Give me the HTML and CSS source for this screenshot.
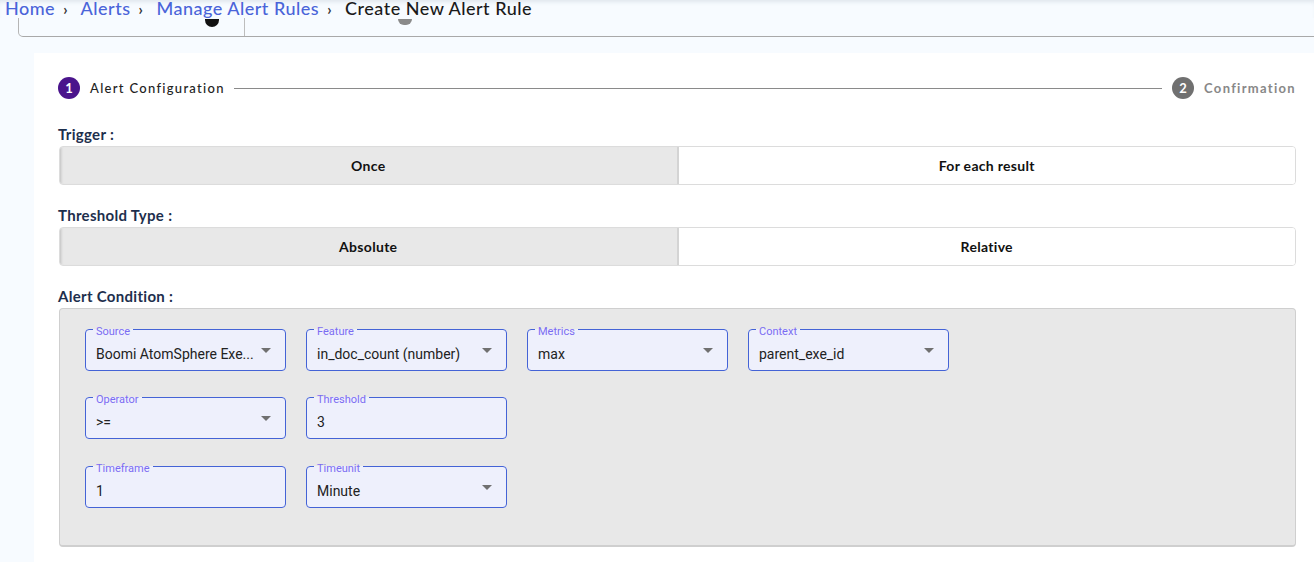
FILE: index.html
```html
<!DOCTYPE html>
<html>
<head>
<meta charset="utf-8">
<link rel="stylesheet" href="styles.css">
</head>
<body>
<div class="page">
  <header class="crumbs">
    <a class="crumb-link">Home</a><span class="sep">›</span>
    <a class="crumb-link">Alerts</a><span class="sep">›</span>
    <a class="crumb-link">Manage Alert Rules</a><span class="sep">›</span>
    <span class="crumb-current">Create New Alert Rule</span>
  </header>
  <div class="tabbar">
    <div class="tab tab-first"><span class="tab-dot dark"></span></div>
    <div class="tab tab-second"><span class="tab-dot grey"></span></div>
  </div>
  <div class="layout">
    <div class="rail"></div>
    <main class="panel">
      <div class="stepper">
        <div class="step active"><span class="step-num">1</span><span class="step-label">Alert Configuration</span></div>
        <div class="step-line"></div>
        <div class="step"><span class="step-num">2</span><span class="step-label">Confirmation</span></div>
      </div>

      <section class="section">
        <div class="section-label">Trigger :</div>
        <div class="toggle">
          <button class="toggle-btn selected">Once</button>
          <button class="toggle-btn">For each result</button>
        </div>
      </section>

      <section class="section">
        <div class="section-label">Threshold Type :</div>
        <div class="toggle">
          <button class="toggle-btn selected">Absolute</button>
          <button class="toggle-btn">Relative</button>
        </div>
      </section>

      <section class="section">
        <div class="section-label">Alert Condition :</div>
        <div class="condition">
          <div class="field-row">
            <fieldset class="field"><legend>Source</legend><div class="field-value"><span class="val">Boomi AtomSphere Exe...</span><span class="caret"></span></div></fieldset>
            <fieldset class="field"><legend>Feature</legend><div class="field-value"><span class="val">in_doc_count (number)</span><span class="caret"></span></div></fieldset>
            <fieldset class="field"><legend>Metrics</legend><div class="field-value"><span class="val">max</span><span class="caret"></span></div></fieldset>
            <fieldset class="field"><legend>Context</legend><div class="field-value"><span class="val">parent_exe_id</span><span class="caret"></span></div></fieldset>
          </div>
          <div class="field-row">
            <fieldset class="field"><legend>Operator</legend><div class="field-value"><span class="val">&gt;=</span><span class="caret"></span></div></fieldset>
            <fieldset class="field"><legend>Threshold</legend><div class="field-value"><span class="val">3</span></div></fieldset>
          </div>
          <div class="field-row field-row-last">
            <fieldset class="field"><legend>Timeframe</legend><div class="field-value"><span class="val">1</span></div></fieldset>
            <fieldset class="field"><legend>Timeunit</legend><div class="field-value"><span class="val">Minute</span><span class="caret"></span></div></fieldset>
          </div>
        </div>
      </section>
    </main>
  </div>
</div>
</body>
</html>
```

FILE: styles.css
```css
* { box-sizing: border-box; }
html, body { margin: 0; padding: 0; }
body {
  background: #f7fbff;
  font-family: Lato, "Noto Sans", sans-serif;
  color: #1f2d3d;
  overflow: hidden;
  height: 562px;
}
.page { display: flex; flex-direction: column; height: 562px; }

.crumbs {
  height: 18px;
  padding-left: 5px;
  font-size: 18px;
  line-height: 16px;
  letter-spacing: 0.5px;
  font-weight: 500;
  white-space: nowrap;
  box-shadow: inset 0 4px 4px -2px rgba(60, 80, 110, 0.12);
  background: #f7fbff;
  flex: none;
}
.crumb-link { color: #4a64d9; }
.crumb-current { color: #1a1a1a; }
.sep { color: #333; font-size: 15px; margin: 0 8px; font-weight: 700; }

.tabbar {
  height: 19px;
  margin-left: 18px;
  display: flex;
  border-left: 1px solid #b5b5b5;
  border-bottom: 1px solid #a9a9a9;
  border-bottom-left-radius: 5px;
  flex: none;
}
.tab { display: flex; justify-content: flex-end; align-items: flex-start; }
.tab-first { width: 226px; border-right: 1px solid #bdbdbd; padding-right: 25px; }
.tab-second { width: 167px; }
.tab-dot { width: 14px; height: 8px; border-radius: 0 0 7px 7px; margin-top: 1px; }
.tab-dot.dark { background: #111; }
.tab-dot.grey { background: #8a8a8a; height: 6px; }

.layout { display: flex; flex: 1; margin-top: 16px; }
.rail { width: 34px; flex: none; }
.panel {
  flex: 1;
  background: #fff;
  padding: 24px 18px 0 24px;
}

.stepper { display: flex; align-items: center; height: 22px; }
.step { display: flex; align-items: center; gap: 10px; }
.step-num {
  width: 22px; height: 22px; border-radius: 50%;
  background: #707070; color: #fff;
  font-size: 13px; font-weight: 700;
  display: flex; align-items: center; justify-content: center;
}
.step.active .step-num { background: #4a148c; }
.step-label { font-size: 13px; letter-spacing: 1.3px; color: #888; font-weight: 700; }
.step.active .step-label { color: #222; font-weight: 500; }
.step-line { flex: 1; height: 1px; background: #8a8a8a; margin: 1px 10px 0 9px; }

.section { margin-top: 20px; }
.section:first-of-type { margin-top: 25px; }
.section-label {
  font-size: 15px;
  line-height: 20px;
  font-weight: 700;
  letter-spacing: 0.3px;
  color: #1e2f4d;
  margin-bottom: 2px;
}

.toggle {
  display: flex;
  height: 39px;
  border: 1px solid #dcdcdc;
  border-radius: 4px;
  overflow: hidden;
  margin-left: 1px;
}
.toggle-btn {
  flex: 1;
  border: 0;
  background: #fff;
  font-family: Lato, "Noto Sans", sans-serif;
  font-size: 14px;
  font-weight: 700;
  letter-spacing: 0.3px;
  color: #111;
  padding: 0;
}
.toggle-btn.selected {
  background: #e8e8e8;
  border-right: 2px solid #d4d4d4;
  box-shadow: inset 3px 0 3px -2px rgba(0, 0, 0, 0.18);
}

.condition {
  height: 239px;
  margin: 1px 0 0 1px;
  background: #e8e8e8;
  border: 1px solid #cfcfcf;
  border-bottom-width: 2px;
  border-radius: 4px;
  padding: 14px 25px 0 25px;
  display: flex;
  flex-direction: column;
  gap: 20px;
}
.field-row { display: flex; gap: 20px; }
.field-row-last { margin-top: 1px; }
.field {
  width: 201px;
  margin: 0;
  padding: 0 7px;
  border: 1px solid #4463d6;
  border-radius: 4px;
  background: #eef0fc;
  min-width: 0;
}
.field legend {
  font-family: Roboto, sans-serif;
  font-size: 11px;
  line-height: 12px;
  padding: 0 3px;
  color: #7b6cf2;
  position: relative;
  top: 3px;
}
.field-value {
  height: 35px;
  display: flex;
  align-items: center;
  padding: 2px 3px 0;
  font-family: Roboto, sans-serif;
  font-size: 14px;
  color: #222;
}
.val { flex: 1; white-space: nowrap; overflow: hidden; }
.caret {
  width: 0; height: 0;
  border-left: 5px solid transparent;
  border-right: 5px solid transparent;
  border-top: 5px solid #707070;
  margin: -6px 4px 0 0;
}
```
